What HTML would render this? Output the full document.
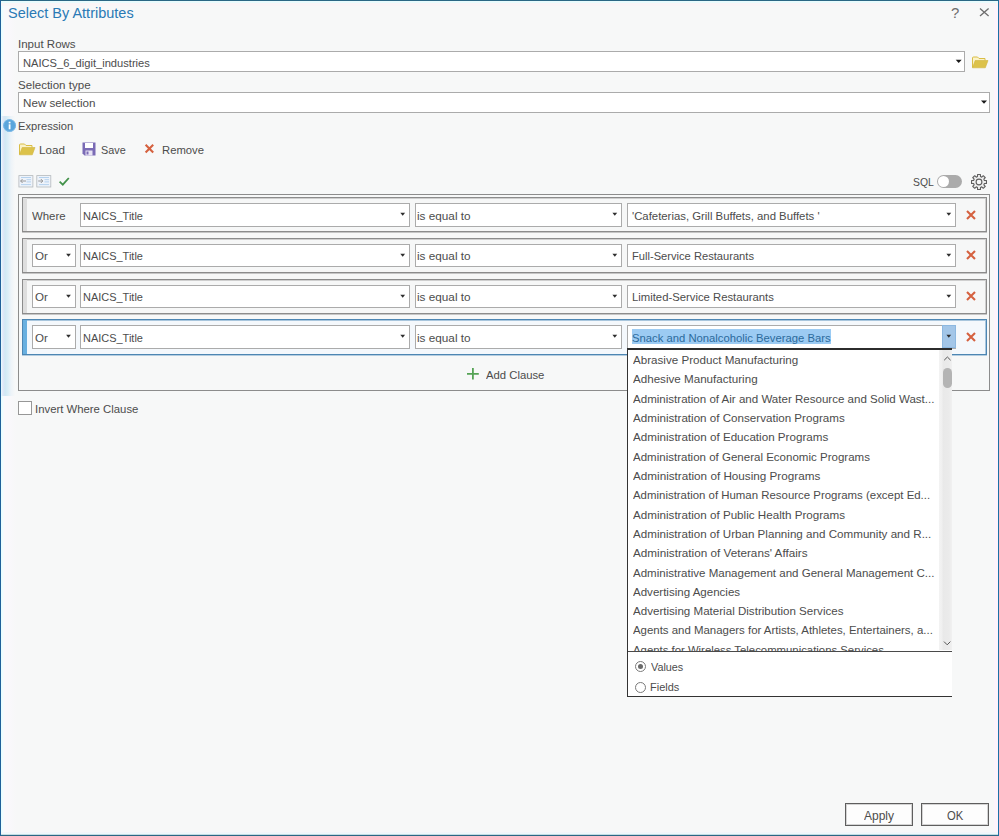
<!DOCTYPE html>
<html><head><meta charset="utf-8"><title>Select By Attributes</title>
<style>
*{box-sizing:border-box;margin:0;padding:0}
html,body{width:999px;height:836px;overflow:hidden;background:#f7f8f8}
body{font-family:"Liberation Sans",sans-serif;font-size:12px;color:#4c4c4c;position:relative}
.abs{position:absolute}
.t{position:absolute;white-space:nowrap;line-height:20px;height:20px;transform-origin:0 0}
.box{position:absolute;background:#fff;border:1px solid #ababab}
.row{position:absolute;left:22px;width:965px;height:35px;border:1px solid #8c8c8c;background:#f6f7f7;box-shadow:inset 0 1px 0 0 #cfcfcf,0 1px 0 0 #c6c6c6,inset -1px 0 0 0 #cfcfcf}
.row i{position:absolute;left:0;top:0;width:4px;height:33px;background:#dedede}
.row.sel{border-color:#4d86b3;background:#f4f8fc;box-shadow:inset 0 1px 0 0 #a9c6dd,0 1px 0 0 #b4cde0,inset -1px 0 0 0 #a9c6dd}
.row.sel i{background:#69b0e0}
.x{position:absolute;width:10px;height:10px}
</style></head><body>
<div class="abs" style="left:0;top:0;width:999px;height:836px;background:#f7f8f8"></div>
<div class="abs" style="left:1px;top:0;width:15px;height:836px;background:linear-gradient(90deg,#e6fdff 0,#f1fdff 2px,#fbf8fb 3px,#f9f8fb 9px,#f7f8f8 15px)"></div>
<div class="abs" style="left:1px;top:116px;width:14px;height:280px;background:linear-gradient(90deg,#e6fdff 0,#e2e6f7 2px,#d0e8f4 4px,#dceef7 7px,#edf3f8 10px,#f7f8f8 14px)"></div>
<div class="abs" style="left:994px;top:0;width:4px;height:836px;background:#fdf4fc"></div>
<div class="abs" style="left:0;top:1px;width:999px;height:2px;background:#e9fcfd"></div>
<div class="abs" style="left:0;top:3px;width:999px;height:3px;background:#faf5f7"></div>
<div class="abs" style="left:0;top:832px;width:999px;height:2px;background:linear-gradient(#f4f4fa,#ecfbfc)"></div>
<div class="abs" style="left:0;top:834px;width:999px;height:1px;background:#c3dce3"></div>
<div class="abs" style="left:0;top:0;width:999px;height:1px;background:#2b6784"></div>
<div class="abs" style="left:0;top:835px;width:999px;height:1px;background:#2b6784"></div>
<div class="abs" style="left:0;top:0;width:1px;height:836px;background:#20609a"></div>
<div class="abs" style="left:998px;top:0;width:1px;height:836px;background:#1a70a6"></div>
<div class="t" style="left:8.37px;top:3.00px;font-size:15px;color:#2a7ab5;transform:scaleX(0.9659);">Select By Attributes</div>
<div class="t" style="left:951.23px;top:3.00px;font-size:14.5px;color:#6e6e6e;transform:scaleX(1.0286);">?</div>
<svg class="abs" style="left:979px;top:7px" width="11" height="11" viewBox="0 0 11 11"><path d="M1 1.4 L9.6 9.1 M9.6 1.4 L1 9.1" stroke="#6e6e6e" stroke-width="1.3" fill="none"/></svg>
<div class="t" style="left:17.95px;top:34.00px;font-size:11.5px;color:#4c4c4c;transform:scaleX(1.0018);">Input Rows</div>
<div class="box" style="left:18px;top:51px;width:947px;height:21px"></div>
<div class="t" style="left:22.73px;top:53.00px;font-size:11.5px;color:#4c4c4c;transform:scaleX(0.9680);">NAICS_6_digit_industries</div>
<svg class="abs" style="left:954px;top:58px" width="10" height="7"><path d="M1.70 1.70 h6 l-3.0 3.2 Z" fill="#1a1a1a"/></svg>
<svg class="abs" style="left:971px;top:55px" width="18" height="14" viewBox="0 0 18 14"><path d="M1.5 12.5 V3 Q1.5 2 2.5 2 H6.5 L8 3.5 H14 V5.5" fill="#fbf3c8" stroke="#d9bd45" stroke-width="1"/><path d="M1.5 12.8 L4.2 5.5 H17 L14.3 12.8 Z" fill="#dcc24a" stroke="#d0b43c" stroke-width="0.6"/></svg>
<div class="t" style="left:18.10px;top:75.00px;font-size:11.5px;color:#4c4c4c;transform:scaleX(1.0049);">Selection type</div>
<div class="box" style="left:18px;top:92px;width:972px;height:21px"></div>
<div class="t" style="left:22.69px;top:93.00px;font-size:11.5px;color:#4c4c4c;transform:scaleX(1.0122);">New selection</div>
<svg class="abs" style="left:980px;top:99px" width="10" height="7"><path d="M1.00 1.60 h6 l-3.0 3.2 Z" fill="#1a1a1a"/></svg>
<svg class="abs" style="left:3px;top:119px" width="14" height="14" viewBox="0 0 14 14"><circle cx="6.6" cy="6.5" r="6.3" fill="#5aa5dc"/><circle cx="6.6" cy="6.5" r="5.9" fill="none" stroke="#7dbbe8" stroke-width="0.8"/><rect x="5.7" y="5.3" width="1.8" height="5" fill="#fff"/><rect x="5.7" y="2.7" width="1.8" height="1.7" fill="#fff"/></svg>
<div class="t" style="left:18.23px;top:116.00px;font-size:11.5px;color:#4c4c4c;transform:scaleX(0.9701);">Expression</div>
<svg class="abs" style="left:18px;top:142px" width="18" height="14" viewBox="0 0 18 14"><path d="M1.5 12.5 V3 Q1.5 2 2.5 2 H6.5 L8 3.5 H14 V5.5" fill="#fbf3c8" stroke="#d9bd45" stroke-width="1"/><path d="M1.5 12.8 L4.2 5.5 H17 L14.3 12.8 Z" fill="#dcc24a" stroke="#d0b43c" stroke-width="0.6"/></svg>
<div class="t" style="left:39.09px;top:140.00px;font-size:11.5px;color:#4c4c4c;transform:scaleX(1.0125);">Load</div>
<svg class="abs" style="left:82px;top:142px" width="14" height="14" viewBox="0 0 14 14"><path d="M0.5 0.5 H13.5 V13.5 H2.5 L0.5 11.5 Z" fill="#7a6bb5"/><rect x="3" y="1" width="8" height="5" fill="#fff"/><rect x="3.5" y="8.5" width="7" height="5" fill="#e8e4f4"/><rect x="4.5" y="9.5" width="2" height="3" fill="#7a6bb5"/></svg>
<div class="t" style="left:100.83px;top:140.00px;font-size:11.5px;color:#4c4c4c;transform:scaleX(0.9405);">Save</div>
<svg class="abs" style="left:144px;top:143px" width="11" height="11" viewBox="0 0 11 11"><path d="M1.6 1.8 L9.2 9.4 M9.2 1.8 L1.6 9.4" stroke="#d5613f" stroke-width="2.1" fill="none"/></svg>
<div class="t" style="left:161.72px;top:140.00px;font-size:11.5px;color:#4c4c4c;transform:scaleX(0.9795);">Remove</div>
<svg class="abs" style="left:18px;top:175px" width="16" height="13" viewBox="0 0 16 13"><rect x="0.9" y="0.6" width="14" height="11.4" fill="#eef3fa" stroke="#b4b8bc" stroke-width="0.8"/><path d="M3 2.5 H13 M8.5 4.7 H13 M8.5 6.9 H13 M3 9.6 H13" stroke="#b5d2ee" stroke-width="1"/><path d="M2.6 6 H8 M4.6 4 L2.6 6 L4.6 8" stroke="#8f8f8f" stroke-width="0.9" fill="none"/></svg>
<svg class="abs" style="left:36px;top:175px" width="16" height="13" viewBox="0 0 16 13"><rect x="0.8" y="0.6" width="14" height="11.4" fill="#eef3fa" stroke="#b4b8bc" stroke-width="0.8"/><path d="M3 2.5 H13 M8.5 4.7 H13 M8.5 6.9 H13 M3 9.6 H13" stroke="#b5d2ee" stroke-width="1"/><path d="M2.2 6 H6.8 M4.8 4 L6.8 6 L4.8 8" stroke="#8f8f8f" stroke-width="0.9" fill="none"/></svg>
<svg class="abs" style="left:58px;top:176px" width="13" height="11" viewBox="0 0 13 11"><path d="M1.6 5.6 L4.8 8.6 L10.8 2" stroke="#43924a" stroke-width="1.8" fill="none"/></svg>
<div class="t" style="left:912.55px;top:172.00px;font-size:11.5px;color:#4c4c4c;transform:scaleX(0.9029);">SQL</div>
<div class="abs" style="left:937px;top:175px;width:25px;height:13px;border-radius:6.5px;background:#ababab"></div>
<div class="abs" style="left:938px;top:176px;width:11px;height:11px;border-radius:6px;background:#fff"></div>
<svg class="abs" style="left:970px;top:173px" width="18" height="18" viewBox="0 0 18 18"><path d="M7.51 3.60 L7.56 1.54 L10.44 1.54 L10.49 3.60 L11.76 4.13 L13.26 2.71 L15.29 4.74 L13.87 6.24 L14.40 7.51 L16.46 7.56 L16.46 10.44 L14.40 10.49 L13.87 11.76 L15.29 13.26 L13.26 15.29 L11.76 13.87 L10.49 14.40 L10.44 16.46 L7.56 16.46 L7.51 14.40 L6.24 13.87 L4.74 15.29 L2.71 13.26 L4.13 11.76 L3.60 10.49 L1.54 10.44 L1.54 7.56 L3.60 7.51 L4.13 6.24 L2.71 4.74 L4.74 2.71 L6.24 4.13 Z" fill="#f0f0f0" stroke="#5e5e5e" stroke-width="1.1" stroke-linejoin="round"/><circle cx="9" cy="9" r="2.9" fill="#f7f8f8" stroke="#5e5e5e" stroke-width="1.1"/></svg>
<div class="abs" style="left:18px;top:194px;width:972px;height:197px;border:1px solid #8c8c8c"></div>
<div class="row" style="top:197px"><i></i></div>
<div class="t" style="left:32.15px;top:206.00px;font-size:11.5px;color:#4c4c4c;transform:scaleX(0.9925);">Where</div>
<div class="box" style="left:80px;top:203px;width:330px;height:24px"></div>
<div class="t" style="left:82.54px;top:206.00px;font-size:11.5px;color:#4c4c4c;transform:scaleX(0.9536);">NAICS_Title</div>
<svg class="abs" style="left:399px;top:211px" width="8" height="6"><path d="M1.30 1.80 h4.8 l-2.4 2.9 Z" fill="#2e2e2e"/></svg>
<div class="box" style="left:415px;top:203px;width:207px;height:24px"></div>
<div class="t" style="left:417.43px;top:206.00px;font-size:11.5px;color:#4c4c4c;transform:scaleX(1.0224);">is equal to</div>
<svg class="abs" style="left:611px;top:211px" width="8" height="6"><path d="M1.40 1.80 h4.8 l-2.4 2.9 Z" fill="#2e2e2e"/></svg>
<div class="box" style="left:627px;top:203px;width:329px;height:24px"></div>
<div class="t" style="left:632.16px;top:206.00px;font-size:11.5px;color:#4c4c4c;transform:scaleX(0.9873);">'Cafeterias, Grill Buffets, and Buffets '</div>
<svg class="abs" style="left:945px;top:211px" width="8" height="6"><path d="M1.40 1.80 h4.8 l-2.4 2.9 Z" fill="#2e2e2e"/></svg>
<svg class="x" style="left:966px;top:210px" viewBox="0 0 10 10"><path d="M1 1 L9 9 M9 1 L1 9" stroke="#d5613f" stroke-width="2.1" fill="none"/></svg>
<div class="row" style="top:238px"><i></i></div>
<div class="box" style="left:32px;top:244px;width:44px;height:23px"></div>
<div class="t" style="left:34.50px;top:246.00px;font-size:11.5px;color:#4c4c4c;transform:scaleX(1.0083);">Or</div>
<svg class="abs" style="left:65px;top:252px" width="8" height="6"><path d="M1.10 1.80 h4.8 l-2.4 2.9 Z" fill="#2e2e2e"/></svg>
<div class="box" style="left:80px;top:244px;width:330px;height:23px"></div>
<div class="t" style="left:82.54px;top:246.00px;font-size:11.5px;color:#4c4c4c;transform:scaleX(0.9536);">NAICS_Title</div>
<svg class="abs" style="left:399px;top:252px" width="8" height="6"><path d="M1.30 1.80 h4.8 l-2.4 2.9 Z" fill="#2e2e2e"/></svg>
<div class="box" style="left:415px;top:244px;width:207px;height:23px"></div>
<div class="t" style="left:417.43px;top:246.00px;font-size:11.5px;color:#4c4c4c;transform:scaleX(1.0224);">is equal to</div>
<svg class="abs" style="left:611px;top:252px" width="8" height="6"><path d="M1.40 1.80 h4.8 l-2.4 2.9 Z" fill="#2e2e2e"/></svg>
<div class="box" style="left:627px;top:244px;width:329px;height:23px"></div>
<div class="t" style="left:631.83px;top:246.00px;font-size:11.5px;color:#4c4c4c;transform:scaleX(0.9687);">Full-Service Restaurants</div>
<svg class="abs" style="left:945px;top:252px" width="8" height="6"><path d="M1.40 1.80 h4.8 l-2.4 2.9 Z" fill="#2e2e2e"/></svg>
<svg class="x" style="left:966px;top:250px" viewBox="0 0 10 10"><path d="M1 1 L9 9 M9 1 L1 9" stroke="#d5613f" stroke-width="2.1" fill="none"/></svg>
<div class="row" style="top:279px"><i></i></div>
<div class="box" style="left:32px;top:285px;width:44px;height:23px"></div>
<div class="t" style="left:34.50px;top:287.00px;font-size:11.5px;color:#4c4c4c;transform:scaleX(1.0083);">Or</div>
<svg class="abs" style="left:65px;top:293px" width="8" height="6"><path d="M1.10 1.80 h4.8 l-2.4 2.9 Z" fill="#2e2e2e"/></svg>
<div class="box" style="left:80px;top:285px;width:330px;height:23px"></div>
<div class="t" style="left:82.54px;top:287.00px;font-size:11.5px;color:#4c4c4c;transform:scaleX(0.9536);">NAICS_Title</div>
<svg class="abs" style="left:399px;top:293px" width="8" height="6"><path d="M1.30 1.80 h4.8 l-2.4 2.9 Z" fill="#2e2e2e"/></svg>
<div class="box" style="left:415px;top:285px;width:207px;height:23px"></div>
<div class="t" style="left:417.43px;top:287.00px;font-size:11.5px;color:#4c4c4c;transform:scaleX(1.0224);">is equal to</div>
<svg class="abs" style="left:611px;top:293px" width="8" height="6"><path d="M1.40 1.80 h4.8 l-2.4 2.9 Z" fill="#2e2e2e"/></svg>
<div class="box" style="left:627px;top:285px;width:329px;height:23px"></div>
<div class="t" style="left:631.82px;top:287.00px;font-size:11.5px;color:#4c4c4c;transform:scaleX(0.9822);">Limited-Service Restaurants</div>
<svg class="abs" style="left:945px;top:293px" width="8" height="6"><path d="M1.40 1.80 h4.8 l-2.4 2.9 Z" fill="#2e2e2e"/></svg>
<svg class="x" style="left:966px;top:291px" viewBox="0 0 10 10"><path d="M1 1 L9 9 M9 1 L1 9" stroke="#d5613f" stroke-width="2.1" fill="none"/></svg>
<div class="row sel" style="top:319px;height:36px"><i style="height:34px"></i></div>
<div class="box" style="left:32px;top:325px;width:44px;height:24px"></div>
<div class="t" style="left:34.50px;top:328.00px;font-size:11.5px;color:#4c4c4c;transform:scaleX(1.0083);">Or</div>
<svg class="abs" style="left:65px;top:333px" width="8" height="6"><path d="M1.10 1.80 h4.8 l-2.4 2.9 Z" fill="#2e2e2e"/></svg>
<div class="box" style="left:80px;top:325px;width:330px;height:24px"></div>
<div class="t" style="left:82.54px;top:328.00px;font-size:11.5px;color:#4c4c4c;transform:scaleX(0.9536);">NAICS_Title</div>
<svg class="abs" style="left:399px;top:333px" width="8" height="6"><path d="M1.30 1.80 h4.8 l-2.4 2.9 Z" fill="#2e2e2e"/></svg>
<div class="box" style="left:415px;top:325px;width:207px;height:24px"></div>
<div class="t" style="left:417.43px;top:328.00px;font-size:11.5px;color:#4c4c4c;transform:scaleX(1.0224);">is equal to</div>
<svg class="abs" style="left:611px;top:333px" width="8" height="6"><path d="M1.40 1.80 h4.8 l-2.4 2.9 Z" fill="#2e2e2e"/></svg>
<div class="box" style="left:627px;top:325px;width:329px;height:24px"></div>
<div class="abs" style="left:632px;top:329px;width:199px;height:15px;background:#9ccbf3"></div>
<div class="abs" style="left:942px;top:325px;width:14px;height:23px;background:#a3c6e8;border:1px solid #8db8e0"></div>
<div class="t" style="left:632.21px;top:328.00px;font-size:11.5px;color:#2b6a9c;transform:scaleX(0.9799);">Snack and Nonalcoholic Beverage Bars</div>
<svg class="abs" style="left:945px;top:333px" width="8" height="6"><path d="M1.40 1.80 h4.8 l-2.4 2.9 Z" fill="#2e2e2e"/></svg>
<svg class="x" style="left:966px;top:332px" viewBox="0 0 10 10"><path d="M1 1 L9 9 M9 1 L1 9" stroke="#d5613f" stroke-width="2.1" fill="none"/></svg>
<svg class="abs" style="left:466px;top:368px" width="14" height="13" viewBox="0 0 14 13"><path d="M6.9 0 V11.6 M1 5.8 H12.8" stroke="#55a355" stroke-width="1.8" fill="none"/></svg>
<div class="t" style="left:485.60px;top:365.00px;font-size:11.5px;color:#4c4c4c;transform:scaleX(0.9822);">Add Clause</div>
<div class="box" style="left:18px;top:401px;width:14px;height:14px;border-color:#979797"></div>
<div class="t" style="left:35.36px;top:399.00px;font-size:11.5px;color:#4c4c4c;transform:scaleX(0.9864);">Invert Where Clause</div>
<div class="abs" style="left:627px;top:348px;width:325px;height:349px;background:#fff;border-left:1px solid #333;border-bottom:1px solid #333;border-top:2px solid #2c2c2c"></div>
<div class="abs" style="left:939px;top:350px;width:13px;height:300px;background:linear-gradient(90deg,#f3f3f3 0,#f0f0f0 3px,#e9e9e9 4px,#ebebeb 10px,#f1f1f1 13px)"></div>
<div class="abs" style="left:628px;top:351px;width:312px;height:300px;overflow:hidden">
<div class="t" style="left:5.10px;top:-1.00px;font-size:11.5px;color:#4c4c4c;transform:scaleX(1.0101);">Abrasive Product Manufacturing</div>
<div class="t" style="left:5.10px;top:18.00px;font-size:11.5px;color:#4c4c4c;transform:scaleX(1.0098);">Adhesive Manufacturing</div>
<div class="t" style="left:5.10px;top:38.00px;font-size:11.5px;color:#4c4c4c;transform:scaleX(1.0042);">Administration of Air and Water Resource and Solid Wast...</div>
<div class="t" style="left:5.10px;top:57.00px;font-size:11.5px;color:#4c4c4c;transform:scaleX(1.0098);">Administration of Conservation Programs</div>
<div class="t" style="left:5.10px;top:76.00px;font-size:11.5px;color:#4c4c4c;transform:scaleX(1.0117);">Administration of Education Programs</div>
<div class="t" style="left:5.10px;top:96.00px;font-size:11.5px;color:#4c4c4c;transform:scaleX(1.0017);">Administration of General Economic Programs</div>
<div class="t" style="left:5.10px;top:115.00px;font-size:11.5px;color:#4c4c4c;transform:scaleX(1.0174);">Administration of Housing Programs</div>
<div class="t" style="left:5.10px;top:134.00px;font-size:11.5px;color:#4c4c4c;transform:scaleX(0.9933);">Administration of Human Resource Programs (except Ed...</div>
<div class="t" style="left:5.10px;top:154.00px;font-size:11.5px;color:#4c4c4c;transform:scaleX(1.0117);">Administration of Public Health Programs</div>
<div class="t" style="left:5.10px;top:173.00px;font-size:11.5px;color:#4c4c4c;transform:scaleX(1.0102);">Administration of Urban Planning and Community and R...</div>
<div class="t" style="left:5.10px;top:192.00px;font-size:11.5px;color:#4c4c4c;transform:scaleX(1.0187);">Administration of Veterans' Affairs</div>
<div class="t" style="left:5.10px;top:212.00px;font-size:11.5px;color:#4c4c4c;transform:scaleX(1.0033);">Administrative Management and General Management C...</div>
<div class="t" style="left:5.10px;top:231.00px;font-size:11.5px;color:#4c4c4c;transform:scaleX(1.0033);">Advertising Agencies</div>
<div class="t" style="left:5.10px;top:250.00px;font-size:11.5px;color:#4c4c4c;transform:scaleX(1.0072);">Advertising Material Distribution Services</div>
<div class="t" style="left:5.10px;top:269.00px;font-size:11.5px;color:#4c4c4c;transform:scaleX(0.9937);">Agents and Managers for Artists, Athletes, Entertainers, a...</div>
<div class="t" style="left:5.10px;top:289.00px;font-size:11.5px;color:#4c4c4c;transform:scaleX(0.9868);">Agents for Wireless Telecommunications Services</div>
</div>
<div class="abs" style="left:628px;top:651px;width:324px;height:1px;background:#4a4a4a"></div>
<svg class="abs" style="left:942px;top:354px" width="11" height="8" viewBox="0 0 11 8"><path d="M2.2 6.2 L5.4 3 L8.6 6.2" stroke="#555" stroke-width="1" fill="none"/></svg>
<div class="abs" style="left:943px;top:368px;width:8.5px;height:20px;border-radius:4.5px;background:#b4b4b4"></div>
<svg class="abs" style="left:942px;top:639px" width="11" height="8" viewBox="0 0 11 8"><path d="M2 2.6 L5.2 5.8 L8.4 2.6" stroke="#555" stroke-width="1" fill="none"/></svg>
<div class="abs" style="left:635px;top:661px;width:11px;height:11px;border-radius:6px;border:1px solid #7a7a7a;background:#fff"></div>
<div class="abs" style="left:638px;top:664px;width:5px;height:5px;border-radius:3px;background:#6a6a6a"></div>
<div class="t" style="left:650.65px;top:657.00px;font-size:11.5px;color:#4c4c4c;transform:scaleX(0.9394);">Values</div>
<div class="abs" style="left:635px;top:681.5px;width:11px;height:11px;border-radius:6px;border:1px solid #7a7a7a;background:#fff"></div>
<div class="t" style="left:650.04px;top:677.00px;font-size:11.5px;color:#4c4c4c;transform:scaleX(0.9558);">Fields</div>
<div class="box" style="left:845px;top:803px;width:68px;height:23px;border-color:#5e5e5e;background:#fdfdfd;box-shadow:inset 0 0 0 1px #d4d4d4"></div>
<div class="t" style="left:864.00px;top:806.00px;font-size:13px;color:#4c4c4c;transform:scaleX(0.9231);">Apply</div>
<div class="box" style="left:921px;top:803px;width:68px;height:23px;border-color:#5e5e5e;background:#fdfdfd;box-shadow:inset 0 0 0 1px #d4d4d4"></div>
<div class="t" style="left:947.28px;top:806.00px;font-size:13px;color:#4c4c4c;transform:scaleX(0.8643);">OK</div>
</body></html>
